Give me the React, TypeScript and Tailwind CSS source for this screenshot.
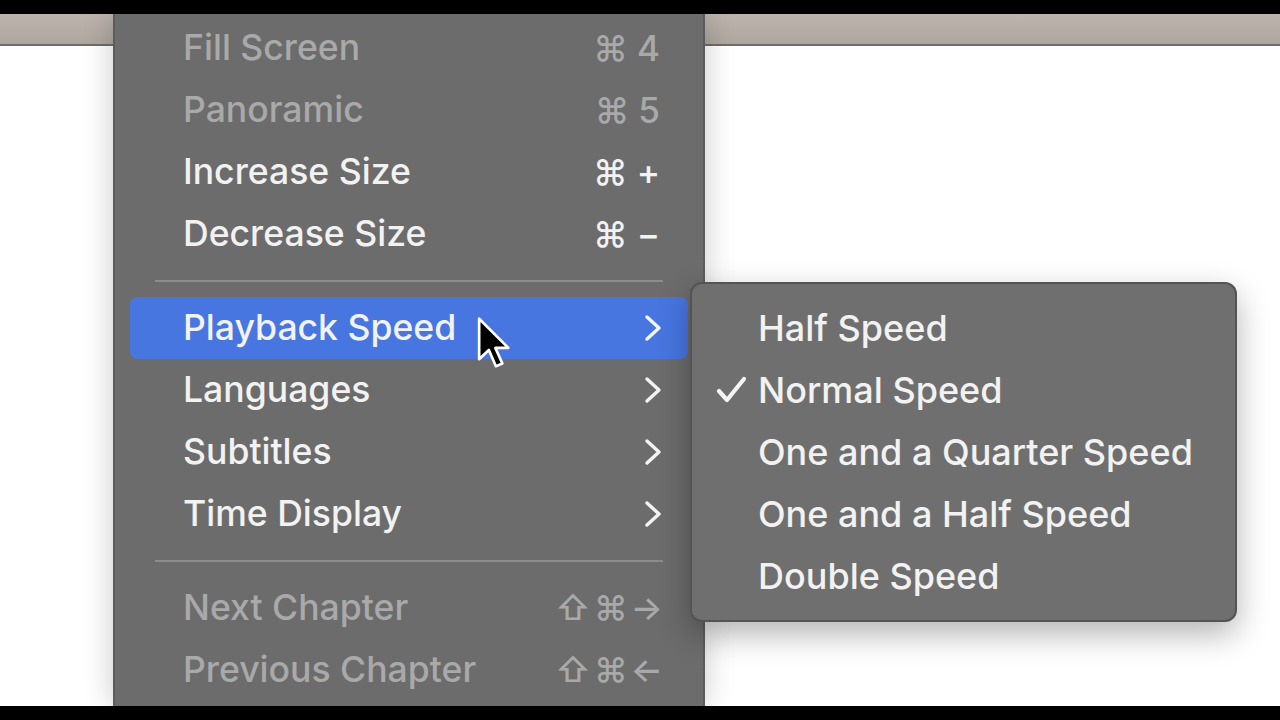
import React from "react";

const FONT = { fontFamily: '"Inter", "Liberation Sans", "DejaVu Sans", sans-serif' };

function Chevron() {
  return (
    <svg width="18" height="28" viewBox="0 0 18 28" className="block">
      <polyline points="3,3 15,14 3,25" fill="none" stroke="#f4f4f4" strokeWidth="3.4" strokeLinecap="round" strokeLinejoin="round" />
    </svg>
  );
}

function Check() {
  return (
    <svg width="32" height="28" viewBox="0 0 32 28" className="block">
      <polyline points="3,15 11,24 28,3" fill="none" stroke="#f4f4f4" strokeWidth="4.2" strokeLinecap="round" strokeLinejoin="round" />
    </svg>
  );
}

function Cursor() {
  return (
    <svg width="36" height="54" viewBox="0 0 13 20" className="block">
      <path d="M1 1 L1 16 L4.6 12.6 L7.2 18.6 L9.6 17.6 L7 11.8 L11.8 11.8 Z" fill="#000" stroke="#fff" strokeWidth="1" strokeLinejoin="round" />
    </svg>
  );
}

type Item = { label: string; disabled?: boolean; shortcut?: string[]; sub?: boolean; active?: boolean };

function Row({ item }: { item: Item }) {
  const color = item.disabled ? "text-[#a9a9a9]" : "text-[#f2f2f2]";
  return (
    <div
      className={`relative mx-[17px] flex h-[62px] items-center justify-between rounded-[8px] pl-[53px] pr-[28px] ${
        item.active ? "bg-[#4776e1]" : ""
      }`}
    >
      <span className={`text-[35.6px] font-medium leading-none ${color}`}>{item.label}</span>
      {item.shortcut && (
        <span className={`flex items-center gap-[9px] text-[35px] font-medium leading-none ${color}`}>
          {item.shortcut.map((s, i) => (
            <span key={i}>{s}</span>
          ))}
        </span>
      )}
      {item.sub && (
        <span className="mr-[-2px]">
          <Chevron />
        </span>
      )}
      {item.active && (
        <span className="absolute left-[346px] top-[19px]">
          <Cursor />
        </span>
      )}
    </div>
  );
}

function Sep() {
  return (
    <div className="flex h-[32px] items-center px-[42px]">
      <div className="h-[2px] w-full bg-[#8c8c8c]" />
    </div>
  );
}

function ChapterRow({ label, arrow }: { label: string; arrow: string }) {
  return (
    <div className="relative mx-[17px] flex h-[62px] items-center justify-between pl-[53px] pr-[25px] text-[#a9a9a9]">
      <span className="text-[35.6px] font-medium leading-none">{label}</span>
      <span className="flex items-center gap-[3px] text-[34px] font-medium leading-none">
        <span>⇧</span>
        <span>⌘</span>
        <span>{arrow}</span>
      </span>
    </div>
  );
}

export default function App() {
  const top: Item[] = [
    { label: "Fill Screen", disabled: true, shortcut: ["⌘", "4"] },
    { label: "Panoramic", disabled: true, shortcut: ["⌘", "5"] },
    { label: "Increase Size", shortcut: ["⌘", "+"] },
    { label: "Decrease Size", shortcut: ["⌘", "−"] },
  ];
  const mid: Item[] = [
    { label: "Playback Speed", sub: true, active: true },
    { label: "Languages", sub: true },
    { label: "Subtitles", sub: true },
    { label: "Time Display", sub: true },
  ];
  const speeds = ["Half Speed", "Normal Speed", "One and a Quarter Speed", "One and a Half Speed", "Double Speed"];

  return (
    <div className="flex h-[720px] w-[1280px] flex-col overflow-hidden bg-black" style={FONT}>
      <div className="h-[14px] shrink-0 bg-black" />
      <div className="relative flex flex-1 flex-col bg-white">
        <div className="h-[32px] shrink-0 border-b-[2px] border-[#6f6c69] bg-gradient-to-b from-[#bcb4ad] to-[#aea7a0]" />
        <div className="flex-1 bg-white" />

        {/* main menu */}
        <div className="absolute left-[113px] top-0 flex h-[692px] w-[592px] flex-col bg-[#6c6c6c] pt-[3px] shadow-[inset_2px_0_0_#5c5c5c,inset_-2px_0_0_#5c5c5c,0_0_28px_rgba(0,0,0,0.22)]">
          {top.map((it) => (
            <Row key={it.label} item={it} />
          ))}
          <Sep />
          {mid.map((it) => (
            <Row key={it.label} item={it} />
          ))}
          <Sep />
          <ChapterRow label="Next Chapter" arrow="→" />
          <ChapterRow label="Previous Chapter" arrow="←" />
        </div>

        {/* submenu */}
        <div className="absolute left-[690px] top-[268px] flex h-[340px] w-[547px] flex-col rounded-[12px] border-[2px] border-[#545454] bg-[#6f6f6f] py-[13px] shadow-[0_12px_32px_rgba(0,0,0,0.3)]">
          {speeds.map((s) => (
            <div key={s} className="flex h-[62px] items-center">
              <div className="flex w-[66px] justify-end pr-[10px]">{s === "Normal Speed" && <Check />}</div>
              <span className="text-[36px] font-medium leading-none text-[#f2f2f2]">{s}</span>
            </div>
          ))}
        </div>
      </div>
      <div className="h-[14px] shrink-0 bg-black" />
    </div>
  );
}
